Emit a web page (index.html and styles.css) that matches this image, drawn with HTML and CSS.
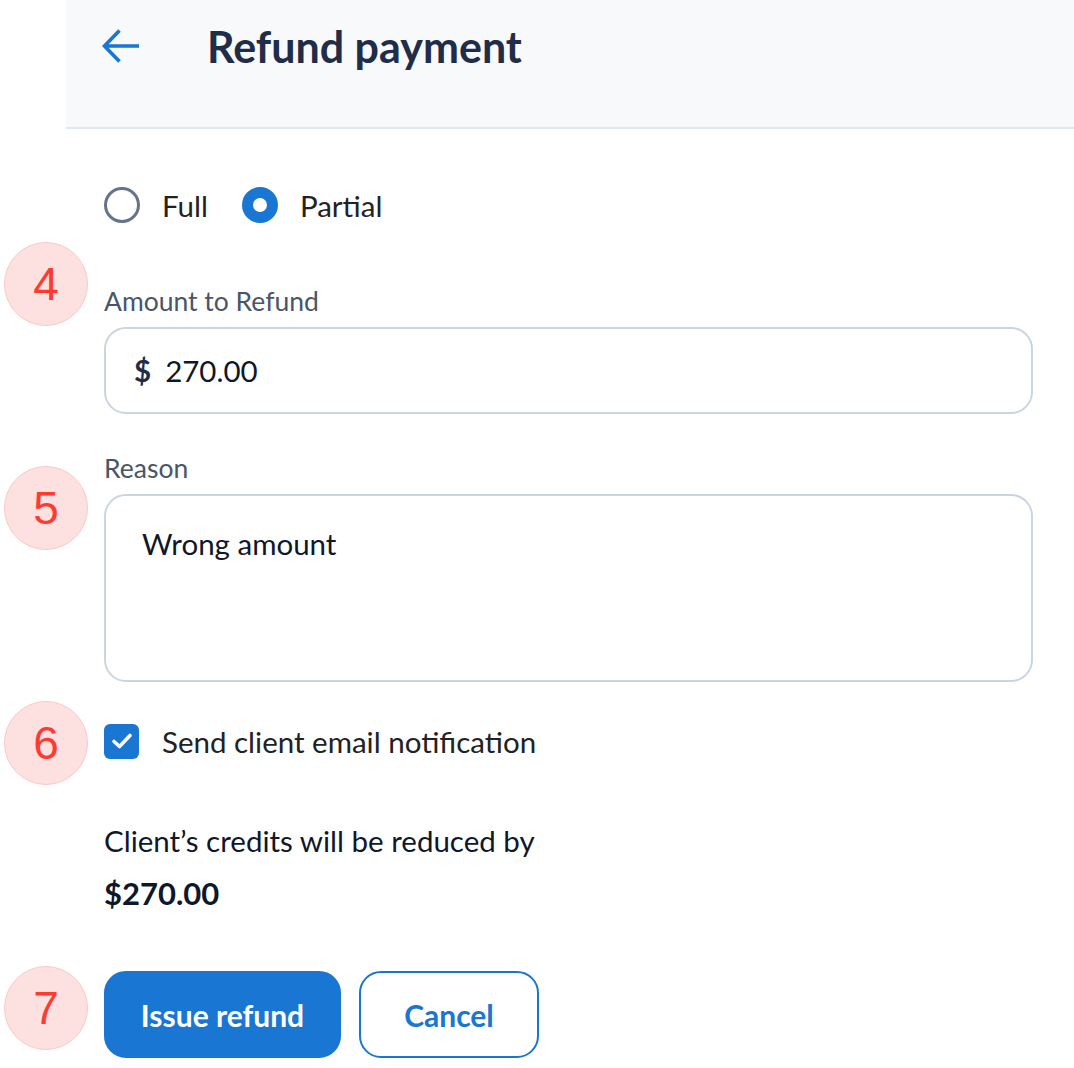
FILE: index.html
```html
<!DOCTYPE html>
<html>
<head>
<meta charset="utf-8">
<link rel="stylesheet" href="styles.css">
</head>
<body>
<header class="header">
  <svg class="back" width="40" height="36" viewBox="0 0 40 36">
    <path d="M38 18 H4.5 M18.5 2.5 L3.5 18 L18.5 33.5" fill="none" stroke="#1976d2" stroke-width="3.6" stroke-linecap="butt" stroke-linejoin="miter"/>
  </svg>
  <h1 class="title">Refund payment</h1>
</header>
<main class="form">
  <div class="radios">
    <label class="radio"><span class="circle"></span>Full</label>
    <label class="radio"><span class="circle on"></span>Partial</label>
  </div>
  <div class="field f-amount">
    <span class="badge b4">4</span>
    <div class="label">Amount to Refund</div>
    <div class="input"><span class="cur">$</span><span>270.00</span></div>
  </div>
  <div class="field f-reason">
    <span class="badge b5">5</span>
    <div class="label">Reason</div>
    <div class="textarea">Wrong amount</div>
  </div>
  <div class="check-row">
    <span class="badge b6">6</span>
    <span class="box"><svg width="24" height="20" viewBox="0 0 24 20"><path d="M4 10.5 L9.5 15.5 L20 4.5" fill="none" stroke="#fff" stroke-width="3.6" stroke-linecap="round" stroke-linejoin="round"/></svg></span>
    <span>Send client email notification</span>
  </div>
  <div class="summary">
    <p class="line">Client’s credits will be reduced by</p>
    <p class="line strong">$270.00</p>
  </div>
  <div class="actions">
    <span class="badge b7">7</span>
    <button class="btn primary">Issue refund</button>
    <button class="btn outline">Cancel</button>
  </div>
</main>
</body>
</html>
```
FILE: styles.css
```css
* { box-sizing: border-box; }
body {
  margin: 0;
  background: #fff;
  font-family: "Lato", "Noto Sans", sans-serif;
  color: #1f1f1f;
  width: 1074px;
  height: 1068px;
  overflow: hidden;
}
.header {
  margin-left: 66px;
  height: 129px;
  background: #f8f9fb;
  border-bottom: 2px solid #e2e8f0;
  display: flex;
  align-items: center;
  padding-left: 35px;
  padding-top: 0;
  padding-bottom: 35px;
}
.back { flex: none; }
.title {
  margin: 0 0 0 66px;
  font-size: 43px;
  font-weight: 700;
  color: #1f2d48;
  letter-spacing: 0;
}
.form {
  padding: 0 41px 0 104px;
}
.radios {
  margin-top: 58px;
  height: 36px;
  display: flex;
  align-items: center;
  gap: 34px;
  font-size: 29.5px;
  color: #222;
}
.radio { display: flex; align-items: center; gap: 22px; }
.circle {
  width: 36px; height: 36px;
  border-radius: 50%;
  border: 3.5px solid #64748b;
  display: inline-block;
}
.circle.on {
  border: 11px solid #1976d2;
  background: #fff;
}
.field { position: relative; }
.f-amount { margin-top: 60px; }
.f-reason { margin-top: 36px; }
.label {
  height: 36px;
  line-height: 36px;
  font-size: 26.5px;
  color: #4a5568;
  margin-bottom: 8px;
}
.input {
  height: 87px;
  border: 2px solid #cbd5e1;
  border-radius: 22px;
  display: flex;
  align-items: center;
  padding-left: 28px;
  gap: 14px;
  font-size: 29.5px;
  color: #0f172a;
}
.cur { font-weight: 700; color: #1f2d48; }
.textarea {
  height: 188px;
  border: 2px solid #cbd5e1;
  border-radius: 22px;
  padding: 30px 36px;
  font-size: 29.5px;
  color: #0f172a;
}
.check-row {
  position: relative;
  margin-top: 41px;
  height: 36px;
  display: flex;
  align-items: center;
  gap: 23px;
  font-size: 29.5px;
  color: #222;
}
.box {
  width: 35px; height: 35px;
  border-radius: 6px;
  background: #1976d2;
  display: flex; align-items: center; justify-content: center;
}
.summary { margin-top: 57px; }
.line {
  margin: 0 0 2px;
  height: 50px;
  line-height: 50px;
  font-size: 29.5px;
  color: #0f172a;
}
.line.strong { font-weight: 700; font-size: 31px; }
.actions {
  position: relative;
  margin-top: 53px;
  display: flex;
  gap: 18px;
}
.btn {
  height: 87px;
  border-radius: 22px;
  font-family: inherit;
  font-size: 30px;
  font-weight: 700;
  cursor: pointer;
}
.primary {
  width: 237px;
  background: #1976d2;
  border: 2px solid #1976d2;
  color: #fff;
}
.outline {
  width: 180px;
  background: #fff;
  border: 2px solid #1976d2;
  color: #1976d2;
}
.badge {
  position: absolute;
  left: -100px;
  width: 84px; height: 84px;
  border-radius: 50%;
  background: #fde0e0;
  border: 1.5px solid #fcc8c8;
  color: #ff3b30;
  font-family: "Liberation Sans", Arial, sans-serif;
  font-size: 46px;
  display: flex; align-items: center; justify-content: center;
}
.b4 { top: -41px; }
.b5 { top: 16px; }
.b6 { top: -22px; }
.b7 { top: -5px; }
```
